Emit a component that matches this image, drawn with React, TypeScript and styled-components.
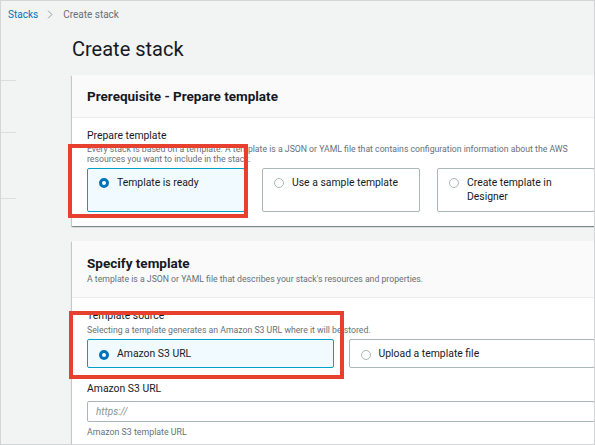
import { FC } from "react";
import styled, { createGlobalStyle } from "styled-components";

const GlobalStyle = createGlobalStyle`
  body {
    margin: 0;
    background: #ffffff;
    font-family: Roboto, "Liberation Sans", sans-serif;
    color: #16191f;
  }
`;

type Option = { label: string; selected?: boolean };

const prepareOptions: Option[] = [
  { label: "Template is ready", selected: true },
  { label: "Use a sample template" },
  { label: "Create template in Designer" },
];

const sourceOptions: Option[] = [
  { label: "Amazon S3 URL", selected: true },
  { label: "Upload a template file" },
];

const RadioTile: FC<Option & { height: number }> = ({
  label,
  selected,
  height,
}) => (
  <Tile $selected={!!selected} $height={height} $center={height < 40}>
    <Radio $selected={!!selected} />
    <TileText>{label}</TileText>
  </Tile>
);

export default function App() {
  return (
    <>
      <GlobalStyle />
      <Frame>
        <Breadcrumbs>
          <Crumb href="#">Stacks</Crumb>
          <Chevron viewBox="0 0 8 12">
            <path d="M1.5 1 L6.5 6 L1.5 11" fill="none" stroke="#879596" strokeWidth="1.2" />
          </Chevron>
          <Current>Create stack</Current>
        </Breadcrumbs>
        <Body>
          <SideNav>
            <NavSection $height={54} />
            <NavSection $height={52} />
            <NavSection $height={66} />
          </SideNav>
          <Main>
            <PageTitle>Create stack</PageTitle>

            <Card>
              <CardHeader>
                <CardTitle>Prerequisite - Prepare template</CardTitle>
              </CardHeader>
              <CardBody>
                <FieldLabel>Prepare template</FieldLabel>
                <FieldHelp $lh={10}>
                  Every stack is based on a template. A template is a JSON or YAML
                  file that contains configuration information about the AWS
                  resources you want to include in the stack.
                </FieldHelp>
                <Tiles $cols={3} $gap={17} $top={4}>
                  {prepareOptions.map((o) => (
                    <RadioTile key={o.label} {...o} height={44} />
                  ))}
                </Tiles>
              </CardBody>
            </Card>

            <Card>
              <CardHeader $compact>
                <CardTitle>Specify template</CardTitle>
                <HeaderDesc>
                  A template is a JSON or YAML file that describes your stack's
                  resources and properties.
                </HeaderDesc>
              </CardHeader>
              <CardBody>
                <FieldLabel>Template source</FieldLabel>
                <FieldHelp $lh={12}>
                  Selecting a template generates an Amazon S3 URL where it will be
                  stored.
                </FieldHelp>
                <Tiles $cols={2} $gap={15} $top={3}>
                  {sourceOptions.map((o) => (
                    <RadioTile key={o.label} {...o} height={29} />
                  ))}
                </Tiles>
                <FieldLabel $top={14}>Amazon S3 URL</FieldLabel>
                <UrlInput placeholder="https://" />
                <Hint>Amazon S3 template URL</Hint>
              </CardBody>
            </Card>
          </Main>
        </Body>

        <Highlight $left={67} $top={143} $width={180} $height={74} />
        <Highlight $left={68} $top={310} $width={275} $height={68} />
      </Frame>
    </>
  );
}

const Frame = styled.div`
  position: relative;
  width: 595px;
  height: 445px;
  box-sizing: border-box;
  border: 1px solid #d3d6d6;
  background: #f2f3f3;
  overflow: hidden;
`;

const Breadcrumbs = styled.nav`
  display: flex;
  align-items: center;
  height: 26px;
  padding-left: 7px;
  font-size: 10px;
`;

const Crumb = styled.a`
  color: #0073bb;
  text-decoration: none;
`;

const Chevron = styled.svg`
  width: 6px;
  height: 9px;
  margin: 0 10px 0 9px;
`;

const Current = styled.span`
  color: #687078;
`;

const Body = styled.div`
  display: flex;
`;

const SideNav = styled.aside`
  width: 15px;
  flex: none;
  display: flex;
  flex-direction: column;
`;

const NavSection = styled.div<{ $height: number }>`
  height: ${({ $height }) => $height}px;
  box-sizing: border-box;
  border-bottom: 1px solid #dadede;
`;

const Main = styled.main`
  margin-left: 56px;
  display: flex;
  flex-direction: column;
  gap: 15px;
`;

const PageTitle = styled.h1`
  margin: 10px 0 -1px;
  font-size: 20px;
  line-height: 24px;
  font-weight: 400;
  color: #16191f;
`;

const Card = styled.section`
  width: 538px;
  background: #ffffff;
  box-shadow: 0 1px 1px 0 rgba(0, 28, 36, 0.3),
    1px 1px 1px 0 rgba(0, 28, 36, 0.15), -1px 1px 1px 0 rgba(0, 28, 36, 0.15);
`;

const CardHeader = styled.header<{ $compact?: boolean }>`
  background: #fafafa;
  border-bottom: 1px solid #eaeded;
  padding: ${({ $compact }) => ($compact ? "14px 15px 12px" : "13px 15px")};
`;

const CardTitle = styled.h2`
  margin: 0;
  font-size: 13.5px;
  line-height: 16px;
  font-weight: 700;
  color: #16191f;
`;

const HeaderDesc = styled.p`
  margin: 2px 0 0;
  font-size: 8.7px;
  line-height: 12px;
  color: #687078;
`;

const CardBody = styled.div`
  padding: 11px 15px 14px;
  display: flex;
  flex-direction: column;
`;

const FieldLabel = styled.label<{ $top?: number }>`
  margin-top: ${({ $top }) => $top ?? 0}px;
  font-size: 10.4px;
  line-height: 14px;
  color: #16191f;
`;

const FieldHelp = styled.p<{ $lh: number }>`
  margin: 1px 0 0;
  font-size: 8.7px;
  line-height: ${({ $lh }) => $lh}px;
  color: #687078;
`;

const Tiles = styled.div<{ $cols: number; $gap: number; $top: number }>`
  display: grid;
  grid-template-columns: repeat(${({ $cols }) => $cols}, 1fr);
  gap: ${({ $gap }) => $gap}px;
  margin-top: ${({ $top }) => $top}px;
`;

const Tile = styled.div<{ $selected: boolean; $height: number; $center: boolean }>`
  display: flex;
  align-items: ${({ $center }) => ($center ? "center" : "flex-start")};
  gap: 8px;
  box-sizing: border-box;
  height: ${({ $height }) => $height}px;
  padding: ${({ $center }) => ($center ? "0 11px" : "7px 11px")};
  border: 1px solid ${({ $selected }) => ($selected ? "#00a1c9" : "#aab7b8")};
  border-radius: 2px;
  background: ${({ $selected }) => ($selected ? "#f1faff" : "#ffffff")};
`;

const Radio = styled.span<{ $selected: boolean }>`
  flex: none;
  width: 10px;
  height: 10px;
  margin-top: 2px;
  box-sizing: border-box;
  border-radius: 50%;
  background: #ffffff;
  border: ${({ $selected }) =>
    $selected ? "3px solid #0073bb" : "1px solid #aab7b8"};
`;

const TileText = styled.span`
  font-size: 10.4px;
  line-height: 14px;
  color: #16191f;
`;

const UrlInput = styled.input`
  margin-top: 5px;
  height: 21px;
  box-sizing: border-box;
  border: 1px solid #aab7b8;
  border-radius: 2px;
  padding: 0 8px;
  font-family: inherit;
  font-size: 10px;
  background: #ffffff;
  outline: none;
  &::placeholder {
    color: #879596;
    font-style: italic;
  }
`;

const Hint = styled.div`
  margin-top: 4px;
  font-size: 8.8px;
  line-height: 12px;
  color: #687078;
`;

const Highlight = styled.div<{
  $left: number;
  $top: number;
  $width: number;
  $height: number;
}>`
  position: absolute;
  left: ${({ $left }) => $left}px;
  top: ${({ $top }) => $top}px;
  width: ${({ $width }) => $width}px;
  height: ${({ $height }) => $height}px;
  box-sizing: border-box;
  border: 4px solid #e8402f;
  pointer-events: none;
`;
